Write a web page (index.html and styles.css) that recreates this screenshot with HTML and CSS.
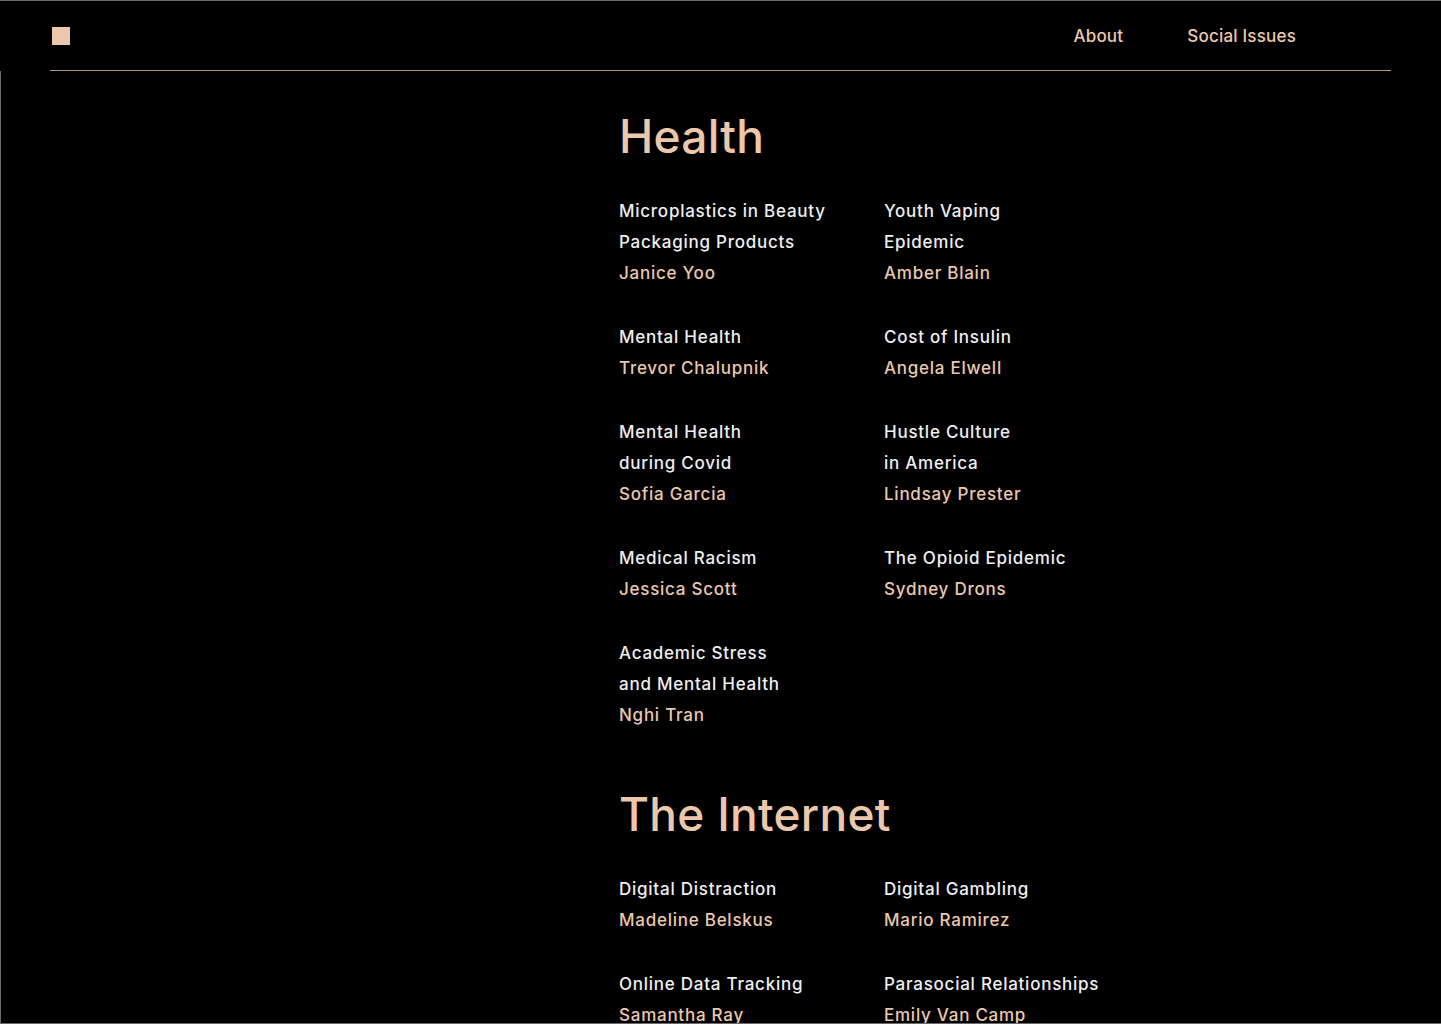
FILE: index.html
```html
<!DOCTYPE html>
<html lang="en">
<head>
<meta charset="utf-8">
<title>Social Issues</title>
<link rel="stylesheet" href="styles.css">
</head>
<body>
<div class="frame">
  <header class="header">
    <div class="header-inner">
      <a class="logo" href="#" aria-label="Home"></a>
      <nav class="nav">
        <a href="#">About</a>
        <a href="#">Social Issues</a>
      </nav>
    </div>
  </header>
  <main class="main">
    <div class="content">
      <section class="topic">
        <h2 class="topic-title">Health</h2>
        <div class="grid">
          <div class="item"><p class="title">Microplastics in Beauty<br>Packaging Products</p><p class="author">Janice Yoo</p></div>
          <div class="item"><p class="title">Youth Vaping<br>Epidemic</p><p class="author">Amber Blain</p></div>
          <div class="item"><p class="title">Mental Health</p><p class="author">Trevor Chalupnik</p></div>
          <div class="item"><p class="title">Cost of Insulin</p><p class="author">Angela Elwell</p></div>
          <div class="item"><p class="title">Mental Health<br>during Covid</p><p class="author">Sofia Garcia</p></div>
          <div class="item"><p class="title">Hustle Culture<br>in America</p><p class="author">Lindsay Prester</p></div>
          <div class="item"><p class="title">Medical Racism</p><p class="author">Jessica Scott</p></div>
          <div class="item"><p class="title">The Opioid Epidemic</p><p class="author">Sydney Drons</p></div>
          <div class="item"><p class="title">Academic Stress<br>and Mental Health</p><p class="author">Nghi Tran</p></div>
        </div>
      </section>
      <section class="topic">
        <h2 class="topic-title">The Internet</h2>
        <div class="grid">
          <div class="item"><p class="title">Digital Distraction</p><p class="author">Madeline Belskus</p></div>
          <div class="item"><p class="title">Digital Gambling</p><p class="author">Mario Ramirez</p></div>
          <div class="item"><p class="title">Online Data Tracking</p><p class="author">Samantha Ray</p></div>
          <div class="item"><p class="title">Parasocial Relationships</p><p class="author">Emily Van Camp</p></div>
        </div>
      </section>
    </div>
  </main>
</div>
</body>
</html>
```
FILE: styles.css
```css
* { box-sizing: border-box; }
html, body {
  margin: 0;
  padding: 0;
  background: #000;
}
body {
  font-family: Inter, "Liberation Sans", sans-serif;
  color: #efefef;
  height: 1024px;
  overflow: hidden;
}
.frame {
  height: 1024px;
  display: flex;
  flex-direction: column;
  border-top: 1px solid #6b6b6b;
  border-bottom: 1px solid #6b6b6b;
  overflow: hidden;
}
.header {
  flex: 0 0 70px;
  height: 70px;
  padding: 0 50px;
  background: #000;
}
.header-inner {
  height: 70px;
  display: flex;
  align-items: center;
  justify-content: space-between;
  border-bottom: 1px solid #b8957a;
  padding-left: 2px;
  padding-right: 95px;
}
.logo {
  display: block;
  width: 18px;
  height: 18px;
  background: #ebc8ab;
  margin-top: 1px;
}
.nav {
  display: flex;
  gap: 64px;
  padding-top: 1px;
}
.nav a {
  color: #ebc8ab;
  text-decoration: none;
  font-size: 17px;
  letter-spacing: 0.2px;
  font-weight: 500;
}
.main {
  flex: 1 1 auto;
  border-left: 1px solid #6b6b6b;
  overflow: hidden;
  padding: 35px 0 0 618px;
}
.topic {
  margin-bottom: 53px;
}
.topic-title {
  margin: 0 0 30px;
  font-size: 46px;
  line-height: 60px;
  font-weight: 500;
  color: #ebc8ab;
  letter-spacing: 0.3px;
}
.grid {
  display: grid;
  grid-template-columns: 265px 265px;
  row-gap: 33px;
}
.item p {
  margin: 0;
  font-size: 17px;
  line-height: 31px;
  letter-spacing: 0.75px;
  font-weight: 500;
}
.title { color: #efefef; }
.author { color: #ebc8ab; }
```
